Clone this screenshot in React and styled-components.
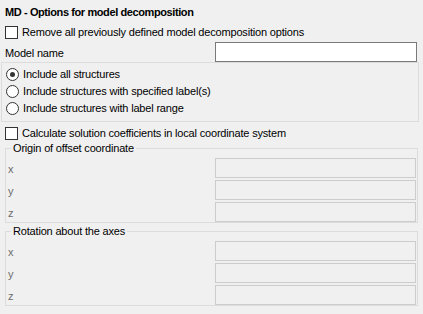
import React from "react"
import styled, { createGlobalStyle } from "styled-components"

const GlobalStyle = createGlobalStyle`
  html, body {
    margin: 0;
    padding: 0;
    background: #f0f0f0;
  }
  body {
    font-family: "Liberation Sans", Arial, sans-serif;
    font-size: 11px;
    letter-spacing: -0.18px;
    color: #000;
  }
`

const Panel = styled.div`
  width: 423px;
  height: 314px;
  background: #f0f0f0;
  box-sizing: border-box;
  padding-top: 4px;
  display: flex;
  flex-direction: column;
`

const Title = styled.div`
  font-weight: bold;
  letter-spacing: -0.4px;
  height: 16px;
  line-height: 16px;
  padding-left: 5px;
`

const CheckRow = styled.label`
  display: flex;
  align-items: center;
  column-gap: 4px;
  height: 16px;
  line-height: 16px;
  padding-left: 5px;
  margin-top: ${(props) => props.mt || 0}px;
  flex: none;
`

const Box = styled.span`
  width: 11px;
  height: 11px;
  border: 1px solid #333;
  background: #fff;
  flex: none;
`

const FieldRow = styled.div`
  display: grid;
  grid-template-columns: 215px 202px;
  align-items: center;
  height: 20px;
  margin-top: 2px;
  flex: none;
  > .fieldRow__label {
    padding-left: 5px;
    padding-top: 2px;
  }
`

const TextInput = styled.div`
  height: 20px;
  box-sizing: border-box;
  border: 1px solid ${(props) => (props.disabled ? "#cccccc" : "#7a7a7a")};
  background: ${(props) => (props.disabled ? "#f0f0f0" : "#fff")};
`

const RadioPanel = styled.div`
  margin: 0 4px 0 1px;
  height: 60px;
  box-sizing: border-box;
  border: 1px solid #dcdcdc;
  display: flex;
  flex-direction: column;
  padding-top: 3px;
  flex: none;
`

const RadioRow = styled.label`
  display: flex;
  align-items: center;
  column-gap: 4px;
  height: 17px;
  line-height: 17px;
  padding-left: 4px;
`

const RadioCircle = styled.span`
  width: 11px;
  height: 11px;
  border: 1px solid #333;
  border-radius: 50%;
  background: #fff;
  flex: none;
  display: flex;
  align-items: center;
  justify-content: center;
  &::after {
    content: "";
    width: 5px;
    height: 5px;
    border-radius: 50%;
    background: ${(props) => (props.checked ? "#333" : "transparent")};
  }
`

const Group = styled.fieldset`
  margin: ${(props) => props.mt || 0}px 5px 0 5px;
  padding: 3px 1px 0 0;
  border: 1px solid #dcdcdc;
  min-width: 0;
  flex: none;
  > legend {
    padding: 0 2px;
    margin-left: 5px;
    height: 13px;
    line-height: 13px;
  }
`

const AxisRow = styled.div`
  display: grid;
  grid-template-columns: 209px 1fr;
  align-items: center;
  height: 20px;
  margin-bottom: 2px;
  &:last-child {
    margin-bottom: 0;
  }
  > .axisRow__label {
    color: #6d6d6d;
    padding-left: 2px;
    padding-top: 1px;
  }
`

const Axes = ({ title, mt }) => (
  <Group mt={mt}>
    <legend>{title}</legend>
    {["x", "y", "z"].map((axis) => (
      <AxisRow key={axis}>
        <span className="axisRow__label">{axis}</span>
        <TextInput disabled />
      </AxisRow>
    ))}
  </Group>
)

const radios = [
  { label: "Include all structures", checked: true },
  { label: "Include structures with specified label(s)" },
  { label: "Include structures with label range" },
]

const App = () => {
  return (
    <Panel>
      <GlobalStyle />
      <Title>MD - Options for model decomposition</Title>
      <CheckRow mt={4}>
        <Box />
        Remove all previously defined model decomposition options
      </CheckRow>
      <FieldRow>
        <span className="fieldRow__label">Model name</span>
        <TextInput />
      </FieldRow>
      <RadioPanel>
        {radios.map((item) => (
          <RadioRow key={item.label}>
            <RadioCircle checked={item.checked} />
            {item.label}
          </RadioRow>
        ))}
      </RadioPanel>
      <CheckRow mt={3}>
        <Box />
        Calculate solution coefficients in local coordinate system
      </CheckRow>
      <Axes title="Origin of offset coordinate" mt={1} />
      <Axes title="Rotation about the axes" mt={2} />
    </Panel>
  )
}

export default App
